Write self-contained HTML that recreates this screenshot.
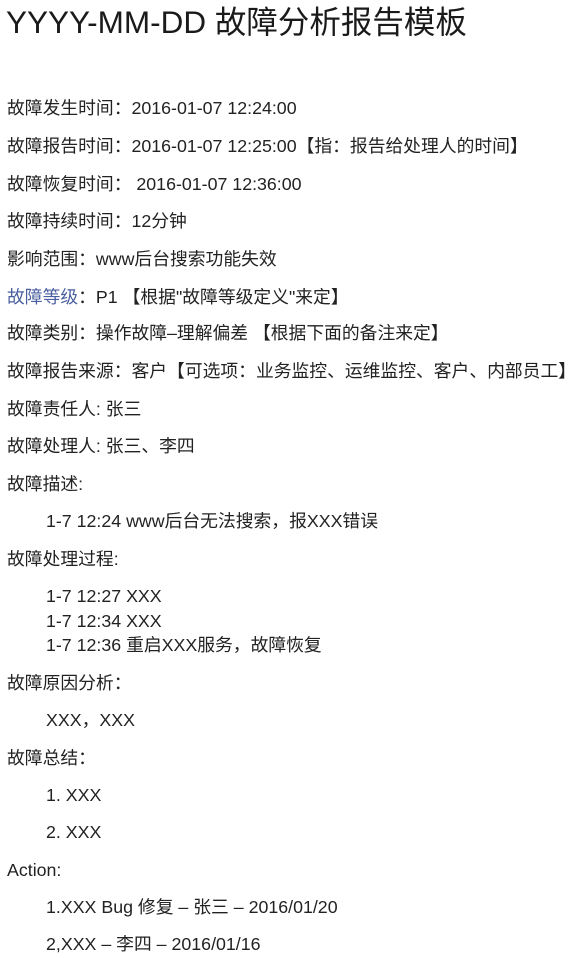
<!DOCTYPE html><html><head><meta charset="utf-8"><style>
body{margin:0;width:584px;height:958px;background:#fff;position:relative;overflow:hidden;font-family:"Liberation Sans","Noto Sans CJK SC",sans-serif;color:#222}
div{position:absolute;white-space:nowrap;font-size:17.8px;line-height:22px}
.t{font-size:31.5px;line-height:38px;left:6px;top:3px;color:#1a1a1a}
.b{color:#4a5fa0}
</style></head><body>
<div class="t">YYYY-MM-DD 故障分析报告模板</div>
<div style="left:7px;top:97px">故障发生时间：2016-01-07 12:24:00</div>
<div style="left:7px;top:135px">故障报告时间：2016-01-07 12:25:00【指：报告给处理人的时间】</div>
<div style="left:7px;top:173px">故障恢复时间： 2016-01-07 12:36:00</div>
<div style="left:7px;top:210px">故障持续时间：12分钟</div>
<div style="left:7px;top:248px">影响范围：www后台搜索功能失效</div>
<div style="left:7px;top:286px"><span class="b">故障等级</span>：P1 【根据"故障等级定义"来定】</div>
<div style="left:7px;top:322px">故障类别：操作故障–理解偏差 【根据下面的备注来定】</div>
<div style="left:7px;top:360px">故障报告来源：客户【可选项：业务监控、运维监控、客户、内部员工】</div>
<div style="left:7px;top:398px">故障责任人: 张三</div>
<div style="left:7px;top:435px">故障处理人: 张三、李四</div>
<div style="left:7px;top:473px">故障描述:</div>
<div style="left:46px;top:510px">1-7 12:24 www后台无法搜索，报XXX错误</div>
<div style="left:7px;top:548px">故障处理过程:</div>
<div style="left:46px;top:585px">1-7 12:27 XXX</div>
<div style="left:46px;top:610px">1-7 12:34 XXX</div>
<div style="left:46px;top:634px">1-7 12:36 重启XXX服务，故障恢复</div>
<div style="left:7px;top:672px">故障原因分析：</div>
<div style="left:46px;top:709px">XXX，XXX</div>
<div style="left:7px;top:747px">故障总结：</div>
<div style="left:46px;top:784px">1. XXX</div>
<div style="left:46px;top:821px">2. XXX</div>
<div style="left:7px;top:859px">Action:</div>
<div style="left:46px;top:896px">1.XXX Bug 修复 – 张三 – 2016/01/20</div>
<div style="left:46px;top:933px">2,XXX – 李四 –  2016/01/16</div>
</body></html>
